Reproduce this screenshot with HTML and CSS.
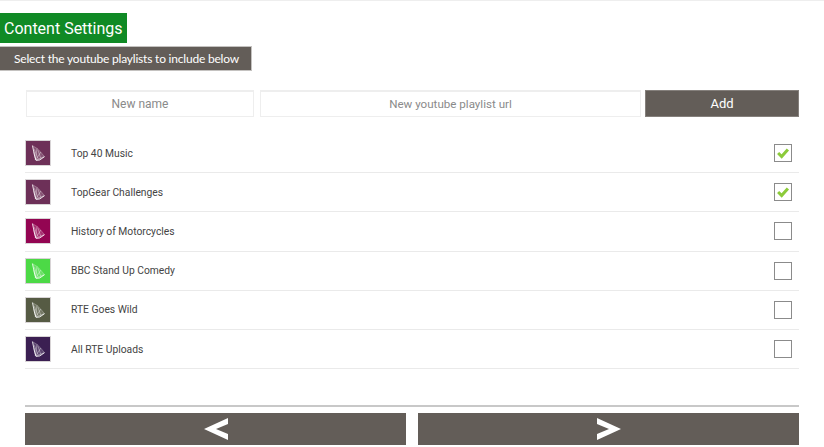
FILE: index.html
```html
<!DOCTYPE html>
<html lang="en">
<head>
  <meta charset="UTF-8" />
  <title>Content Settings</title>
  <link rel="stylesheet" href="styles.css">
</head>
<body>
  <svg class="defs">
    <symbol id="fan" viewBox="0 0 26 26">
      <path d="M7 5 L12 8 L16 12 L20 17 L15 20.5 L10.5 21 Z" fill="#fff" fill-opacity=".18"/>
      <path d="M10 20.5 L12 8 M10.5 20.5 L16 12 M11 20.5 L20 17 M10.5 20.5 L8.5 12 M13 19 L9 9 M16 19 L13 10" fill="none" stroke="#fff" stroke-opacity=".65" stroke-width=".6"/>
      <path d="M7 5 L9.5 17 L11 21 L15 20.5 L20 17" fill="none" stroke="#fff" stroke-opacity=".9" stroke-width="1"/>
      <path d="M7 5 L12 8 L16 12 L20 17" fill="none" stroke="#fff" stroke-opacity=".45" stroke-width=".6"/>
    </symbol>
    <symbol id="tick" viewBox="0 0 18 18">
      <path d="M3.5 9 L7.5 13 L14.5 5" fill="none" stroke="#8ccb3a" stroke-width="3.4"/>
    </symbol>
  </svg>

  <div class="topline"></div>
  <h1 class="title">Content Settings</h1>
  <div class="subtitle">Select the youtube playlists to include below</div>

  <form class="add-form">
    <input class="field field-name" type="text" placeholder="New name" />
    <input class="field field-url" type="text" placeholder="New youtube playlist url" />
    <button class="btn-add" type="button">Add</button>
  </form>

  <ul class="playlists">
    <li class="row">
      <svg class="thumb thumb-music"><use href="#fan"/></svg>
      <span class="row-name">Top 40 Music</span>
      <span class="check"><svg class="tick"><use href="#tick"/></svg></span>
    </li>
    <li class="row">
      <svg class="thumb thumb-music"><use href="#fan"/></svg>
      <span class="row-name">TopGear Challenges</span>
      <span class="check"><svg class="tick"><use href="#tick"/></svg></span>
    </li>
    <li class="row">
      <svg class="thumb thumb-history"><use href="#fan"/></svg>
      <span class="row-name">History of Motorcycles</span>
      <span class="check"></span>
    </li>
    <li class="row">
      <svg class="thumb thumb-comedy"><use href="#fan"/></svg>
      <span class="row-name">BBC Stand Up Comedy</span>
      <span class="check"></span>
    </li>
    <li class="row">
      <svg class="thumb thumb-wild"><use href="#fan"/></svg>
      <span class="row-name">RTE Goes Wild</span>
      <span class="check"></span>
    </li>
    <li class="row">
      <svg class="thumb thumb-uploads"><use href="#fan"/></svg>
      <span class="row-name">All RTE Uploads</span>
      <span class="check"></span>
    </li>
  </ul>

  <div class="nav">
    <button class="nav-btn" type="button">
      <svg class="arrow" viewBox="0 0 24 24"><path d="M24 1 V7 L12 12 L24 17 V23 L0 12 Z" fill="#fff"/></svg>
    </button>
    <button class="nav-btn" type="button">
      <svg class="arrow" viewBox="0 0 24 24"><path d="M0 1 V7 L12 12 L0 17 V23 L24 12 Z" fill="#fff"/></svg>
    </button>
  </div>
</body>
</html>
```

FILE: styles.css
```css
* {
  box-sizing: border-box;
}
body {
  margin: 0;
  height: 447px;
  overflow: hidden;
  background: white;
  font-family: Roboto, sans-serif;
}
.defs {
  display: none;
}
.topline {
  height: 1px;
  background: #eee;
}
.title {
  width: 127px;
  height: 30px;
  margin: 12px 0 0;
  padding-left: 4px;
  background: #108a25;
  color: white;
  font-size: 16px;
  font-weight: normal;
  line-height: 31px;
  white-space: nowrap;
}
.subtitle {
  width: 252px;
  height: 25px;
  margin-top: 3px;
  padding-left: 14px;
  background: #635d58;
  border: 1px solid #c4c2c0;
  border-left: 0;
  color: white;
  font-family: Lato, sans-serif;
  font-size: 12px;
  letter-spacing: -0.2px;
  line-height: 24px;
  white-space: nowrap;
}
.add-form {
  display: flex;
  height: 27px;
  margin: 19px 25px 0 26px;
}
.field {
  height: 100%;
  border: 1px solid #eee;
  border-top-width: 2px;
  font-family: Roboto, sans-serif;
  font-size: 12px;
  text-align: center;
  outline: none;
}
.field::placeholder {
  color: #8a8a8a;
  opacity: 1;
}
.field-name {
  width: 228px;
  margin-right: 6px;
}
.field-url {
  width: 381px;
  margin-right: 4px;
  font-size: 11.6px;
}
.btn-add {
  flex: 1;
  background: #635d58;
  border: 1px solid #85807c;
  color: white;
  font-family: Roboto, sans-serif;
  font-size: 13px;
}
.playlists {
  list-style: none;
  margin: 17px 25px 0;
  padding: 0;
}
.row {
  display: flex;
  align-items: center;
  height: 39.2px;
  border-bottom: 1px solid #eaeaea;
}
.thumb {
  width: 26px;
  height: 26px;
  border: 1px solid #d8d4d6;
  flex: none;
}
.thumb-music {
  background: #6d3058;
}
.thumb-history {
  background: #930552;
}
.thumb-comedy {
  background: #4cd946;
}
.thumb-wild {
  background: #565b44;
}
.thumb-uploads {
  background: #3b1f52;
}
.row-name {
  flex: 1;
  margin-left: 20px;
  color: #444;
  font-size: 10.3px;
}
.check {
  width: 18px;
  height: 18px;
  margin-right: 7px;
  border: 1px solid #8b8b8b;
  background: white;
}
.tick {
  display: block;
  width: 16px;
  height: 16px;
}
.nav {
  display: flex;
  justify-content: space-between;
  height: 40px;
  margin: 36px 25px 0;
  padding-top: 6px;
  border-top: 2px solid #c8c8c8;
}
.nav-btn {
  display: flex;
  align-items: center;
  justify-content: center;
  width: 381px;
  height: 32px;
  padding: 0;
  background: #635d58;
  border: 0;
}
.arrow {
  width: 24px;
  height: 24px;
}
```
